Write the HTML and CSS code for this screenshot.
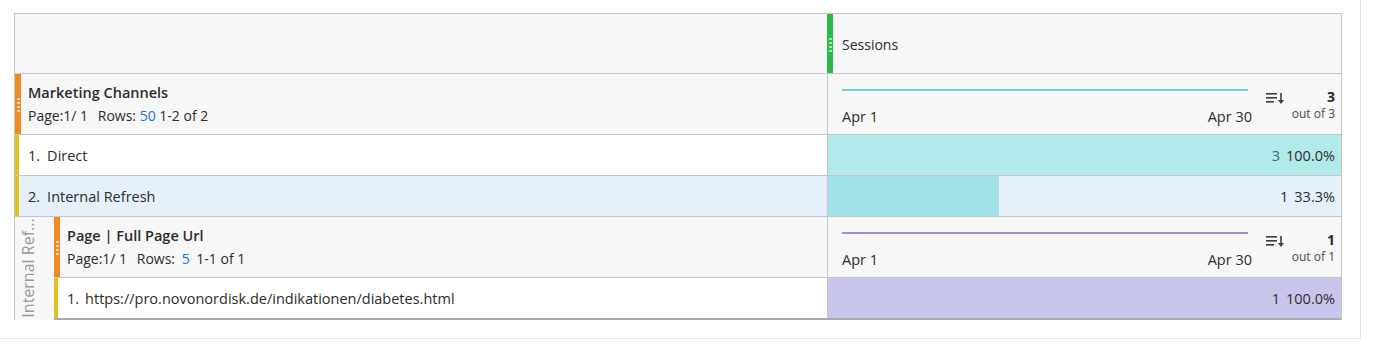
FILE: index.html
```html
<!DOCTYPE html>
<html lang="en">
<head>
    <meta charset="UTF-8">
    <title>Freeform table</title>
    <link rel="stylesheet" href="styles.css">
</head>
<body>
<div class="panel">
  <div class="table">

    <div class="row head-row">
      <div class="cell left"></div>
      <div class="cell right metric-head">
        <span class="grip green"></span>
        <span class="metric-name">Sessions</span>
      </div>
    </div>

    <div class="row dim-row">
      <div class="cell left dim-head">
        <span class="grip orange"></span>
        <div class="dim-text">
          <div class="dim-title">Marketing Channels</div>
          <div class="dim-meta">Page:1/ 1 <span class="rows">Rows:</span> <span class="link">50</span> 1-2 of 2</div>
        </div>
      </div>
      <div class="cell right summary">
        <div class="trend">
          <div class="spark teal"></div>
          <div class="dates"><span>Apr 1</span><span>Apr 30</span></div>
        </div>
        <svg class="sort" width="18" height="12" viewBox="0 0 18 12">
          <rect x="0" y="1" width="11" height="1.6" fill="#3d3d3d"/>
          <rect x="0" y="5" width="11" height="1.6" fill="#3d3d3d"/>
          <rect x="0" y="9" width="8" height="1.6" fill="#3d3d3d"/>
          <rect x="14.2" y="1" width="1.6" height="8" fill="#3d3d3d"/>
          <path d="M12 8 L18 8 L15 12 Z" fill="#3d3d3d"/>
        </svg>
        <div class="total">
          <div class="total-num">3</div>
          <div class="total-of">out of 3</div>
        </div>
      </div>
    </div>

    <div class="row item">
      <div class="cell left item-label"><span class="yellow"></span><span class="num">1.</span>Direct</div>
      <div class="cell right value teal-fill"><span class="count">3</span>100.0%</div>
    </div>

    <div class="row item selected">
      <div class="cell left item-label"><span class="yellow"></span><span class="num">2.</span>Internal Refresh</div>
      <div class="cell right value">
        <span class="bar" style="width: 33.3%"></span>
        <span class="count">1</span>33.3%
      </div>
    </div>

    <div class="nested">
      <div class="side-label"><span>Internal Ref...</span></div>
      <div class="nested-body">
        <div class="row dim-row">
          <div class="cell left dim-head">
            <span class="grip orange"></span>
            <div class="dim-text">
              <div class="dim-title">Page | Full Page Url</div>
              <div class="dim-meta">Page:1/ 1 <span class="rows">Rows:</span> <span class="link small">5</span> 1-1 of 1</div>
            </div>
          </div>
          <div class="cell right summary">
            <div class="trend">
              <div class="spark purple"></div>
              <div class="dates"><span>Apr 1</span><span>Apr 30</span></div>
            </div>
            <svg class="sort" width="18" height="12" viewBox="0 0 18 12">
              <rect x="0" y="1" width="11" height="1.6" fill="#3d3d3d"/>
              <rect x="0" y="5" width="11" height="1.6" fill="#3d3d3d"/>
              <rect x="0" y="9" width="8" height="1.6" fill="#3d3d3d"/>
              <rect x="14.2" y="1" width="1.6" height="8" fill="#3d3d3d"/>
              <path d="M12 8 L18 8 L15 12 Z" fill="#3d3d3d"/>
            </svg>
            <div class="total">
              <div class="total-num">1</div>
              <div class="total-of">out of 1</div>
            </div>
          </div>
        </div>
        <div class="row item last">
          <div class="cell left item-label"><span class="yellow"></span><span class="num url-num">1.</span>https://pro.novonordisk.de/indikationen/diabetes.html</div>
          <div class="cell right value purple-fill"><span class="count">1</span>100.0%</div>
        </div>
      </div>
    </div>

  </div>
</div>
</body>
</html>
```

FILE: styles.css
```css
body {
    margin: 0;
    font-family: "Open Sans", "Noto Sans", sans-serif;
    font-size: 14.5px;
    color: #2c2c2c;
    background-color: #fff;
}

.panel {
    width: 1361px;
    height: 339px;
    box-sizing: border-box;
    border-right: 1px solid #e3e3e3;
    border-bottom: 1px solid #e3e3e3;
    padding: 13px 0 0 14px;
}

.table {
    width: 1328px;
    border: 1px solid #c4c4c4;
    border-bottom: none;
    box-sizing: border-box;
}

.row {
    display: grid;
    grid-template-columns: 812px 1fr;
    border-bottom: 1px solid #c6c6c6;
    box-sizing: border-box;
}

.cell {
    position: relative;
    display: flex;
    align-items: center;
}

.cell.right {
    border-left: 1px solid #c6c6c6;
}

.head-row {
    height: 60px;
    background-color: #f7f7f7;
}

.metric-head {
    padding-left: 14px;
}

.metric-name {
    font-size: 14px;
    margin-top: 2px;
}

.grip {
    position: absolute;
    top: 0;
    bottom: 0;
    left: 0;
    width: 6px;
}

.grip::after {
    content: "";
    position: absolute;
    left: 2px;
    top: 50%;
    width: 3px;
    height: 16px;
    margin-top: -7px;
    background: radial-gradient(circle, rgba(255, 255, 255, 0.65) 1.1px, transparent 1.5px) 0 0 / 3px 4px;
}

.grip.green {
    left: -1px;
    background-color: #2db84a;
}

.grip.orange {
    background-color: #ef8a22;
}

.dim-row {
    height: 61px;
    background-color: #f7f7f7;
}

.dim-head {
    padding-left: 13px;
}

.dim-text {
    display: flex;
    flex-direction: column;
    gap: 4px;
    margin-top: -1px;
}

.dim-title {
    font-weight: 600;
    font-size: 14.5px;
    line-height: 20px;
}

.dim-meta {
    font-size: 14px;
    line-height: 18px;
}

.rows {
    margin-left: 6px;
}

.link {
    color: #1473e6;
}

.link.small {
    margin: 0 3px;
}

.summary {
    padding: 0 6px 0 14px;
    align-items: flex-start;
}

.trend {
    flex: 1;
    display: flex;
    flex-direction: column;
    padding-top: 15px;
}

.spark {
    height: 2px;
    margin: 0 4px 17px 0;
}

.spark.teal {
    background-color: #6fd4d9;
}

.spark.purple {
    background-color: #9b90dd;
}

.dates {
    display: flex;
    justify-content: space-between;
    font-size: 14.5px;
    line-height: 18px;
}

.sort {
    margin: 18px 0 0 14px;
}

.total {
    width: 51px;
    text-align: right;
    padding-top: 14px;
}

.total-num {
    font-weight: 700;
    font-size: 14px;
    line-height: 18px;
}

.total-of {
    font-size: 12px;
    color: #4b4b4b;
    line-height: 16px;
}

.item {
    height: 41px;
    background-color: #fff;
}

.item.selected {
    background-color: #e5f0fb;
}

.item-label {
    padding-left: 13px;
}

.yellow {
    position: absolute;
    top: 0;
    bottom: 0;
    left: 0;
    width: 4px;
    background-color: #e0c11c;
}

.num {
    margin-right: 7px;
}

.url-num {
    margin-right: 6px;
}

.value {
    justify-content: flex-end;
    padding-right: 6px;
}

.count {
    margin-right: 6px;
}

.teal-fill {
    background-color: #b0ebea;
}

.teal-fill .count {
    color: #2b6e70;
}

.purple-fill {
    background-color: #c9c6ee;
}

.bar {
    position: absolute;
    top: 0;
    bottom: 0;
    left: 0;
    background-color: #a3e1ea;
}

.nested {
    display: grid;
    grid-template-columns: 39px 1fr;
}

.side-label {
    background-color: #f7f7f7;
    display: flex;
    align-items: center;
    justify-content: center;
}

.side-label span {
    transform: rotate(-90deg);
    white-space: nowrap;
    color: #9a9a9a;
    font-size: 16px;
    margin: 0 14px 2px 0;
}

.nested-body .row {
    grid-template-columns: 773px 1fr;
}

.nested-body .item.last {
    height: 42px;
    border-bottom: 2px solid #ababab;
}
```
